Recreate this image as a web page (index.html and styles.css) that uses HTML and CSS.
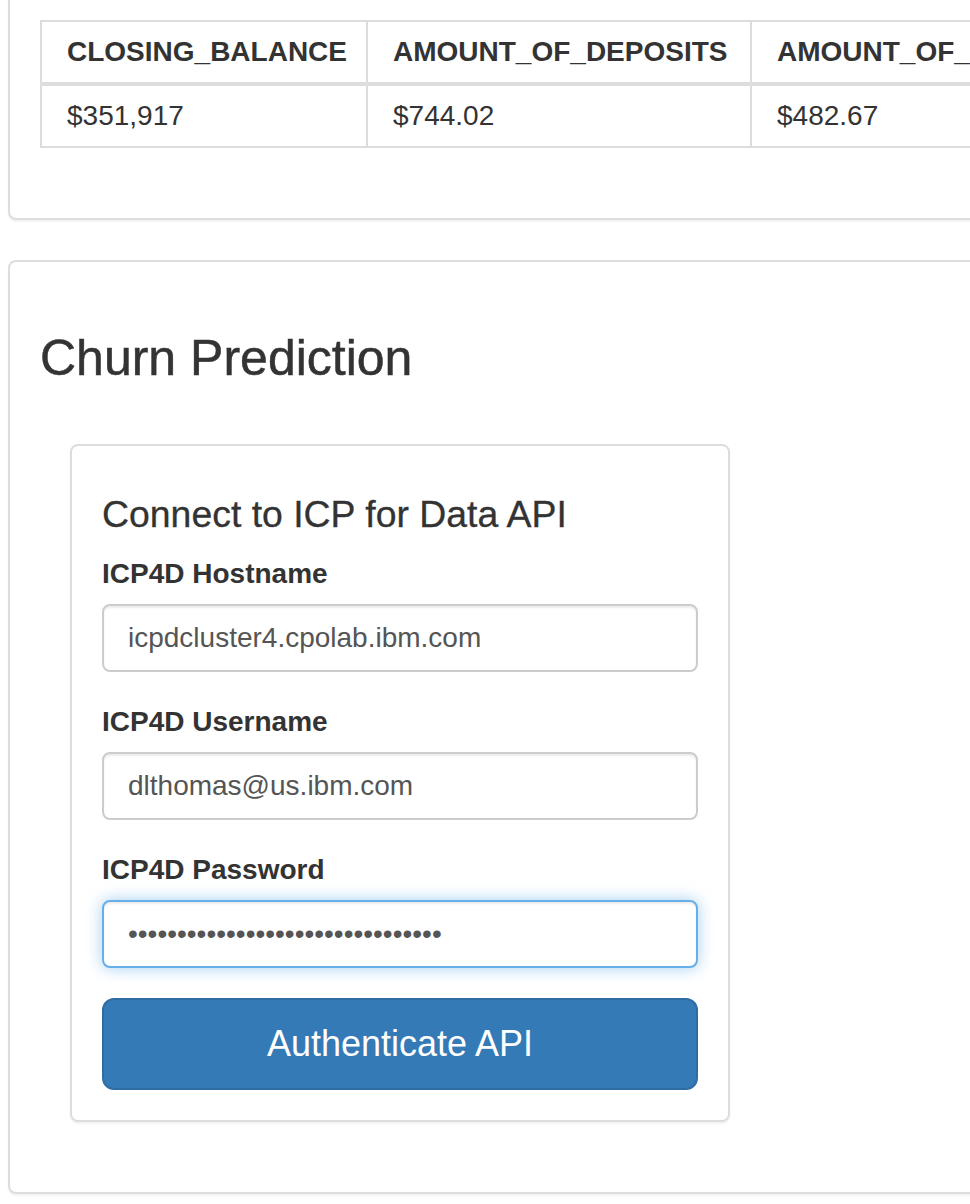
FILE: index.html
```html
<!DOCTYPE html>
<html lang="en">
<head>
<meta charset="utf-8">
<title>Churn Prediction</title>
<link rel="stylesheet" href="styles.css">
</head>
<body>
<div class="page">
  <div class="panel panel-top">
    <table class="data">
      <colgroup><col class="c1"><col class="c2"><col class="c3"></colgroup>
      <thead>
        <tr><th>CLOSING_BALANCE</th><th>AMOUNT_OF_DEPOSITS</th><th>AMOUNT_OF_PAYMENTS</th></tr>
      </thead>
      <tbody>
        <tr><td>$351,917</td><td>$744.02</td><td>$482.67</td></tr>
      </tbody>
    </table>
  </div>
  <div class="panel">
    <h3 class="title">Churn Prediction</h3>
    <div class="card-wrap">
      <div class="card">
        <h4 class="card-title">Connect to ICP for Data API</h4>
        <form class="form">
          <div class="form-group">
            <label class="label">ICP4D Hostname</label>
            <input class="control" type="text" value="icpdcluster4.cpolab.ibm.com" readonly>
          </div>
          <div class="form-group">
            <label class="label">ICP4D Username</label>
            <input class="control" type="text" value="dlthomas@us.ibm.com" readonly>
          </div>
          <div class="form-group">
            <label class="label">ICP4D Password</label>
            <input class="control focus" type="password" value="abcdefghijklmnopqrstuvwxyz123456" readonly>
          </div>
          <button class="btn" type="button">Authenticate API</button>
        </form>
      </div>
    </div>
  </div>
</div>
</body>
</html>
```
FILE: styles.css
```css
html, body {
  margin: 0;
  padding: 0;
  overflow: hidden;
  background: #fff;
}
body {
  font-family: "Liberation Sans", Arial, Helvetica, sans-serif;
  font-size: 28px;
  line-height: 40px;
  color: #333;
}
.page {
  padding-left: 8px;
  width: 1500px;
}
.panel {
  border: 2px solid #ddd;
  border-radius: 8px;
  box-shadow: 0 2px 2px rgba(0, 0, 0, 0.05);
  padding: 30px;
  margin-bottom: 40px;
  background: #fff;
}
.panel-top {
  margin-top: -12px;
}
.data {
  border-collapse: collapse;
  table-layout: fixed;
  width: 1112px;
  margin-bottom: 40px;
}
.data col.c1 { width: 326px; }
.data col.c2 { width: 384px; }
.data col.c3 { width: 400px; }
.data th,
.data td {
  border: 2px solid #ddd;
  padding: 10px 25px;
  text-align: left;
  white-space: nowrap;
  overflow: hidden;
  line-height: 40px;
}
.data th {
  font-weight: bold;
  border-bottom-width: 4px;
}
.title {
  font-size: 50px;
  line-height: 52.8px;
  font-weight: 500;
  -webkit-text-stroke: 0.5px #333;
  margin: 40px 0 20px;
}
.card-wrap {
  padding: 39px 0 0 30px;
}
.card {
  width: 660px;
  box-sizing: border-box;
  border: 2px solid #ddd;
  border-radius: 8px;
  box-shadow: 0 2px 2px rgba(0, 0, 0, 0.05);
  padding: 30px;
  margin-bottom: 40px;
  background: #fff;
}
.card-title {
  font-size: 37.4px;
  line-height: 39.6px;
  font-weight: 500;
  -webkit-text-stroke: 0.3px #333;
  margin: 19px 0 20px;
}
.form {
  margin: 0;
}
.form-group {
  margin-bottom: 30px;
}
.label {
  display: block;
  font-weight: bold;
  margin-bottom: 10px;
  line-height: 40px;
}
.control {
  display: block;
  width: 100%;
  height: 68px;
  box-sizing: border-box;
  padding: 12px 24px;
  font-family: inherit;
  font-size: 28px;
  line-height: 40px;
  color: #555;
  background: #fff;
  border: 2px solid #ccc;
  border-radius: 8px;
  box-shadow: inset 0 2px 2px rgba(0, 0, 0, 0.075);
  outline: none;
  margin: 0;
}
.control.focus {
  border-color: #66afe9;
  box-shadow: inset 0 2px 2px rgba(0, 0, 0, 0.075), 0 0 16px rgba(102, 175, 233, 0.6);
}
.btn {
  display: block;
  width: 100%;
  box-sizing: border-box;
  padding: 20px 32px;
  font-family: inherit;
  font-size: 36px;
  line-height: 48px;
  color: #fff;
  background: #337ab7;
  border: 2px solid #2e6da4;
  border-radius: 12px;
  text-align: center;
  cursor: pointer;
  margin: 0;
}
```
